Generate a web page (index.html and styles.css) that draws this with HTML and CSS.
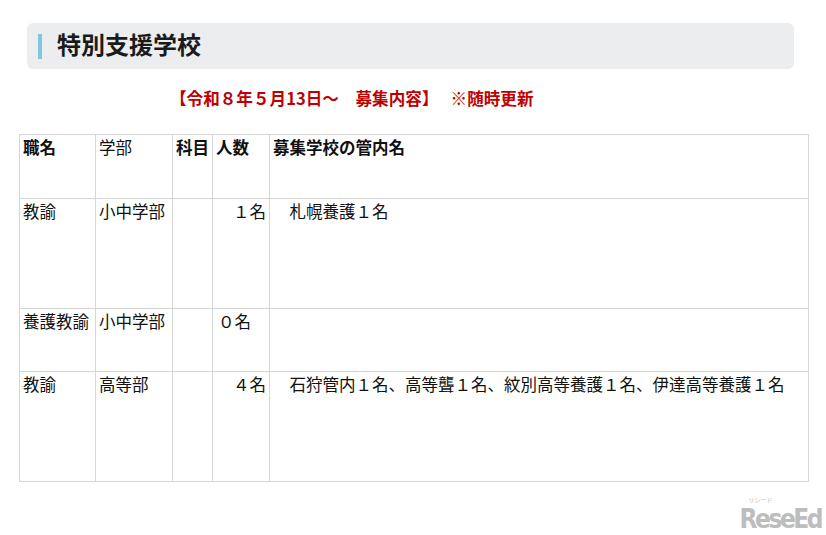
FILE: index.html
```html
<!DOCTYPE html>
<html lang="ja">
<head>
<meta charset="utf-8">
<link rel="stylesheet" href="styles.css">
</head>
<body>
<div class="page">
  <div class="heading">
    <span class="bar"></span>
    <h1 class="title">特別支援学校</h1>
  </div>
  <p class="notice">【令和８年５月13日～　募集内容】　 ※随時更新</p>
  <table class="grid">
    <colgroup>
      <col class="c1"><col class="c2"><col class="c3"><col class="c4"><col class="c5">
    </colgroup>
    <tr class="row-head">
      <th>職名</th><th class="light">学部</th><th>科目</th><th>人数</th><th>募集学校の管内名</th>
    </tr>
    <tr class="row-tall">
      <td>教諭</td><td>小中学部</td><td></td><td class="num">１名</td><td>　札幌養護１名</td>
    </tr>
    <tr class="row-short">
      <td>養護教諭</td><td>小中学部</td><td></td><td class="num-left">０名</td><td></td>
    </tr>
    <tr class="row-tall">
      <td>教諭</td><td>高等部</td><td></td><td class="num">４名</td><td>　石狩管内１名、高等聾１名、紋別高等養護１名、伊達高等養護１名</td>
    </tr>
  </table>
  <div class="footer">
    <div class="logo"><span class="logo-kana">リシード</span><span class="logo-text">ReseEd</span></div>
  </div>
</div>
</body>
</html>
```
FILE: styles.css
```css
html, body {
  margin: 0;
  padding: 0;
  background: #ffffff;
}
body {
  font-family: "Noto Sans CJK JP", "Noto Sans", sans-serif;
  color: #111;
}
.page {
  width: 826px;
  height: 535px;
  position: relative;
  overflow: hidden;
}
.heading {
  margin: 23px 0 0 27px;
  width: 767px;
  height: 46px;
  background: #ebedef;
  border-radius: 6px;
  display: flex;
  align-items: center;
  box-sizing: border-box;
  padding-left: 11px;
}
.bar {
  width: 4px;
  height: 25px;
  background: #7ec6d9;
  margin-right: 15px;
}
.title {
  margin: 0 0 5px 0;
  font-size: 24px;
  font-weight: 700;
  line-height: 30px;
  color: #1a1a1a;
}
.notice {
  margin: 16px 0 0 170px;
  font-size: 16.6px;
  line-height: 26px;
  font-weight: 700;
  color: #c00000;
}
.grid {
  margin: 23px 0 0 19px;
  width: 790px;
  border-collapse: collapse;
  table-layout: fixed;
}
.c1 { width: 76px; }
.c2 { width: 77px; }
.c3 { width: 40px; }
.c4 { width: 57px; }
.c5 { width: auto; }
.grid th, .grid td {
  border: 1px solid #d6d6d6;
  vertical-align: top;
  text-align: left;
  font-size: 16.5px;
  line-height: 22px;
  padding: 1px 3px 0 3px;
  white-space: nowrap;
  overflow: hidden;
}
.grid th {
  font-weight: 700;
}
.grid th.light {
  font-weight: 400;
}
.row-head { height: 64px; }
.row-tall { height: 110px; }
.row-short { height: 63px; }
.grid td.num {
  text-align: right;
  padding-right: 3px;
}
.grid td.num-left {
  padding-left: 5px;
}
.footer {
  position: absolute;
  right: 5px;
  bottom: 1px;
}
.logo {
  display: flex;
  flex-direction: column;
  align-items: flex-start;
  font-family: "DejaVu Sans", sans-serif;
  font-weight: 700;
  color: #bdbdbd;
}
.logo-text {
  font-size: 26px;
  font-stretch: condensed;
  letter-spacing: -2.5px;
  line-height: 30px;
}
.logo-kana {
  margin-left: 9px;
  font-family: "Noto Sans CJK JP", sans-serif;
  font-size: 6px;
  line-height: 8px;
  font-weight: 400;
  color: #bdbdbd;
}
```
